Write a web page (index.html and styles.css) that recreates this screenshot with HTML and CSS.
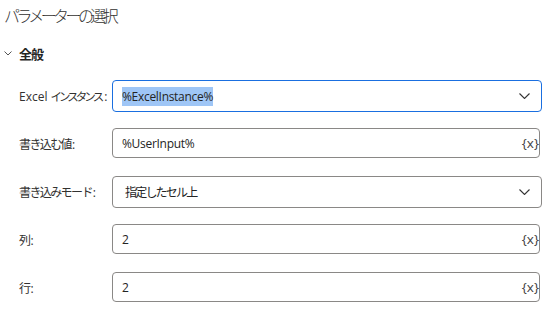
FILE: index.html
```html
<!DOCTYPE html>
<html lang="ja">
<head>
    <meta charset="UTF-8">
    <meta name="viewport" content="width=device-width, initial-scale=1.0">
    <title>パラメーターの選択</title>
    <link rel="stylesheet" href="styles.css">
</head>
<body>
    <h1 class="title">パラメーターの選択</h1>

    <div class="section-head">
        <svg class="caret" width="8" height="5" viewBox="0 0 8 5"><path d="M0.5 0.5 L4 4 L7.5 0.5" fill="none" stroke="#555" stroke-width="1"/></svg>
        <span>全般</span>
    </div>

    <div class="params">
        <div class="row">
            <label class="label">Excel <span class="jp kana">インスタンス</span>:</label>
            <div class="field select focused">
                <span class="value"><span class="selected">%ExcelInstance%</span></span>
                <svg class="chevron" width="11" height="6" viewBox="0 0 11 6"><path d="M0.5 0.5 L5.5 5.5 L10.5 0.5" fill="none" stroke="#333" stroke-width="1.1"/></svg>
            </div>
        </div>
        <div class="row">
            <label class="label"><span class="jp">書き込む値</span>:</label>
            <div class="field text">
                <span class="value">%UserInput%</span>
                <span class="var">{x}</span>
            </div>
        </div>
        <div class="row">
            <label class="label"><span class="jp">書き込みモード</span>:</label>
            <div class="field select">
                <span class="value option jp">指定したセル上</span>
                <svg class="chevron" width="11" height="6" viewBox="0 0 11 6"><path d="M0.5 0.5 L5.5 5.5 L10.5 0.5" fill="none" stroke="#333" stroke-width="1.1"/></svg>
            </div>
        </div>
        <div class="row">
            <label class="label"><span class="jp">列</span>:</label>
            <div class="field text">
                <span class="value">2</span>
                <span class="var">{x}</span>
            </div>
        </div>
        <div class="row">
            <label class="label"><span class="jp">行</span>:</label>
            <div class="field text">
                <span class="value">2</span>
                <span class="var">{x}</span>
            </div>
        </div>
    </div>
</body>
</html>
```

FILE: styles.css
```css
/* ページ全体 */
body {
    margin: 0;
    padding: 0;
    background: #ffffff;
    color: #242424;
    font-family: 'Open Sans', 'Noto Sans CJK JP', sans-serif;
    font-size: 12px;
}

/* 日本語は詰め気味に */
.jp {
    letter-spacing: -1.6px;
    margin-right: 1px;
}

.kana {
    font-size: 11.5px;
    letter-spacing: -3px;
    margin-right: 3px;
}

.title {
    margin: 0;
    padding: 6px 0 0 4px;
    height: 20px;
    line-height: 20px;
    font-size: 16px;
    font-weight: 300;
    letter-spacing: -3.6px;
    color: #323130;
}

.section-head {
    display: flex;
    align-items: center;
    height: 20px;
    margin-top: 17px;
    padding-left: 4px;
    font-size: 13px;
    font-weight: 600;
    letter-spacing: -1px;
}

.caret {
    margin-right: 7px;
}

.params {
    display: flex;
    flex-direction: column;
    gap: 16px;
    margin-top: 17px;
    padding: 0 4px 0 19px;
}

.row {
    display: flex;
    align-items: center;
    height: 32px;
}

.label {
    width: 93px;
    flex-shrink: 0;
    white-space: nowrap;
    color: #323130;
    align-self: center;
}

.field {
    flex: 1;
    display: flex;
    align-items: center;
    box-sizing: border-box;
    border: 1px solid #8a8886;
    border-radius: 4px;
    background: #fff;
}

.field.select {
    height: 32px;
}

.field.text {
    height: 30px;
    align-self: flex-start;
    margin-right: 2px;
}

.field.focused {
    border-color: #1a6fe0;
}

.value {
    flex: 1;
    padding-left: 9px;
    white-space: nowrap;
    letter-spacing: -0.3px;
}

.value.option {
    padding-left: 12px;
    letter-spacing: -1.8px;
}

.selected {
    background: #9fc6f6;
    padding: 1px 0;
}

.chevron {
    margin-right: 11px;
}

.var {
    margin-right: 0;
    color: #424242;
    font-size: 13.5px;
}
```
